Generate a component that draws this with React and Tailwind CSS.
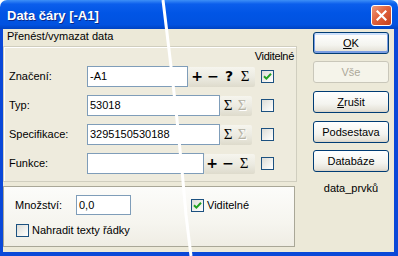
import React from "react";

const font = { fontFamily: '"Liberation Sans", Arial, sans-serif' };

function Check({ checked }) {
  return (
    <div className="w-[13px] h-[13px] border border-[#1c5180] bg-[linear-gradient(135deg,#dcdcd7_0%,#f2f2ef_60%,#ffffff_100%)] flex items-center justify-center shrink-0">
      {checked && (
        <svg width="9" height="9" viewBox="0 0 9 9">
          <path d="M1 4.2 L3.4 6.6 L8 1.8" stroke="#21a121" strokeWidth="2" fill="none" />
        </svg>
      )}
    </div>
  );
}

function Glyph({ ch, w = "w-[16px]", serif, dim }) {
  return (
    <div
      className={`${w} h-full flex items-center justify-center ${
        serif ? "text-[15px] font-normal" : "text-[14px] font-bold"
      } ${dim ? "text-[#b5b2a4] [text-shadow:1px_1px_#ffffff]" : "text-black"}`}
      style={{
        fontFamily: serif
          ? '"Liberation Serif", "Times New Roman", serif'
          : '"DejaVu Sans", sans-serif',
      }}
    >
      {ch}
    </div>
  );
}

function Strip({ children, className = "" }) {
  return (
    <div
      className={`h-[20px] flex items-stretch rounded-[2px] bg-[linear-gradient(180deg,#f6f5ee_0%,#ecebe2_50%,#dedbcc_100%)] ${className}`}
    >
      {children}
    </div>
  );
}

function Input({ w, value }) {
  return (
    <div
      className={`${w} h-[21px] border border-[#7f9db9] bg-white flex items-center pl-[2px] text-[11px] text-black shrink-0`}
    >
      {value}
    </div>
  );
}

function Row({ label, children, checked }) {
  return (
    <div className="flex items-center h-[21px]">
      <div className="w-[83px] pl-[5px] text-[11px] text-black">{label}</div>
      <div className="w-[174px] flex items-center">{children}</div>
      <Check checked={checked} />
    </div>
  );
}

function Btn({ children, def, disabled }) {
  if (disabled)
    return (
      <div className="w-[76px] h-[22px] rounded-[3px] border border-[#c9c7ba] bg-[#f5f4ea] flex items-center justify-center text-[11px] text-[#aca899]">
        {children}
      </div>
    );
  return (
    <div
      className={`w-[76px] h-[22px] rounded-[3px] border border-[#003c74] bg-[linear-gradient(180deg,#ffffff_0%,#f4f4ef_60%,#e6e3d9_90%,#d6d0c5_100%)] flex items-center justify-center text-[11px] text-black ${
        def ? "shadow-[inset_0_-1px_0_1px_#7a9de2,inset_0_1px_0_1px_#cde0fb]" : ""
      }`}
    >
      {children}
    </div>
  );
}

export default function App() {
  return (
    <div className="relative w-[398px] h-[256px] overflow-hidden bg-white flex flex-col" style={font}>
      {/* Title bar */}
      <div className="h-[29px] shrink-0 rounded-t-[7px] bg-[linear-gradient(180deg,#3d8ff7_0%,#0b5eec_14%,#0155e5_45%,#0152e0_85%,#0043c2_100%)] flex items-center pl-[7px] pr-[6px] pt-[2px]">
        <div className="flex-1 text-white font-bold text-[13px] [text-shadow:1px_1px_#0a2a8a]">
          Data čáry [-A1]
        </div>
        <div className="w-[21px] h-[21px] rounded-[3px] border border-white bg-[linear-gradient(135deg,#ec9a7c_0%,#e2623c_45%,#c4401c_100%)] flex items-center justify-center">
          <svg width="11" height="11" viewBox="0 0 11 11">
            <path d="M1.5 1.5 L9.5 9.5 M9.5 1.5 L1.5 9.5" stroke="white" strokeWidth="2.2" strokeLinecap="square" />
          </svg>
        </div>
      </div>

      {/* Body */}
      <div className="flex-1 flex bg-[#ece9d8] border-l-[3px] border-r-[4px] border-b-[4px] border-[#0a48d8]">
        {/* Left column */}
        <div className="w-[294px] flex flex-col">
          <div className="h-[17px] pl-[4px] text-[11px] text-black leading-[15px]">Přenést/vymazat data</div>
          <div className="h-[136px] border border-[#d0cebf] shadow-[inset_1px_1px_0_#ffffff] bg-[#eeebdd] flex flex-col">
            <div className="h-[19px] flex items-center justify-end pr-[2px] text-[11px] tracking-[-0.3px] text-black">Viditelné</div>
            <div className="flex flex-col gap-[8px]">
              <Row label="Značení:" checked>
                <Input w="w-[101px]" value="-A1" />
                <Strip className="pl-[1px] pr-[2px]">
                  <Glyph ch="+" />
                  <Glyph ch="−" />
                  <Glyph ch="?" />
                  <Glyph ch="Σ" serif />
                </Strip>
              </Row>
              <Row label="Typ:">
                <Input w="w-[133px]" value="53018" />
                <Strip className="pl-[1px] pr-[3px]">
                  <Glyph ch="Σ" serif w="w-[14px]" />
                  <Glyph ch="Σ" serif w="w-[14px]" dim />
                </Strip>
              </Row>
              <Row label="Specifikace:">
                <Input w="w-[133px]" value="3295150530188" />
                <Strip className="pl-[1px] pr-[3px]">
                  <Glyph ch="Σ" serif w="w-[14px]" />
                  <Glyph ch="Σ" serif w="w-[14px]" dim />
                </Strip>
              </Row>
              <Row label="Funkce:">
                <Input w="w-[117px]" value="" />
                <Strip className="pr-[3px]">
                  <Glyph ch="+" />
                  <Glyph ch="−" />
                  <Glyph ch="Σ" serif />
                </Strip>
              </Row>
            </div>
          </div>
          <div className="mt-[4px] w-[292px] h-[61px] border border-[#a9a797] bg-[linear-gradient(180deg,#fcfcfa_0%,#f6f5ef_60%,#efede4_100%)] flex flex-col">
            <div className="mt-[8px] flex items-center h-[20px]">
              <div className="w-[72px] pl-[11px] text-[11px] text-black">Množství:</div>
              <div className="w-[55px] h-[20px] border border-[#7f9db9] bg-white flex items-center pl-[2px] text-[11px] text-black">
                0,0
              </div>
              <div className="ml-[60px] flex items-center gap-[3px]">
                <Check checked />
                <span className="text-[11px] text-black">Viditelné</span>
              </div>
            </div>
            <div className="mt-[9px] flex items-center pl-[12px] gap-[3px] h-[13px]">
              <Check />
              <span className="text-[11px] text-black">Nahradit texty řádky</span>
            </div>
          </div>
        </div>

        {/* Right column */}
        <div className="flex-1 flex flex-col pl-[16px] pt-[3px]">
          <Btn def>
            <span><span className="underline">O</span>K</span>
          </Btn>
          <div className="mt-[7px]">
            <Btn disabled>Vše</Btn>
          </div>
          <div className="mt-[8px]">
            <Btn>
              <span><span className="underline">Z</span>rušit</span>
            </Btn>
          </div>
          <div className="mt-[8px]">
            <Btn>Podsestava</Btn>
          </div>
          <div className="mt-[7px]">
            <Btn>Databáze</Btn>
          </div>
          <div className="mt-[8px] w-[76px] text-center text-[11px] text-black">data_prvků</div>
        </div>
      </div>

      {/* white diagonal scratch over the screenshot */}
      <svg className="absolute inset-0 pointer-events-none" width="398" height="256" viewBox="0 0 398 256">
        <polyline
          points="163,0 170,58 176,110 182,170 186,215 191,256"
          fill="none"
          stroke="white"
          strokeWidth="3"
        />
      </svg>
    </div>
  );
}
